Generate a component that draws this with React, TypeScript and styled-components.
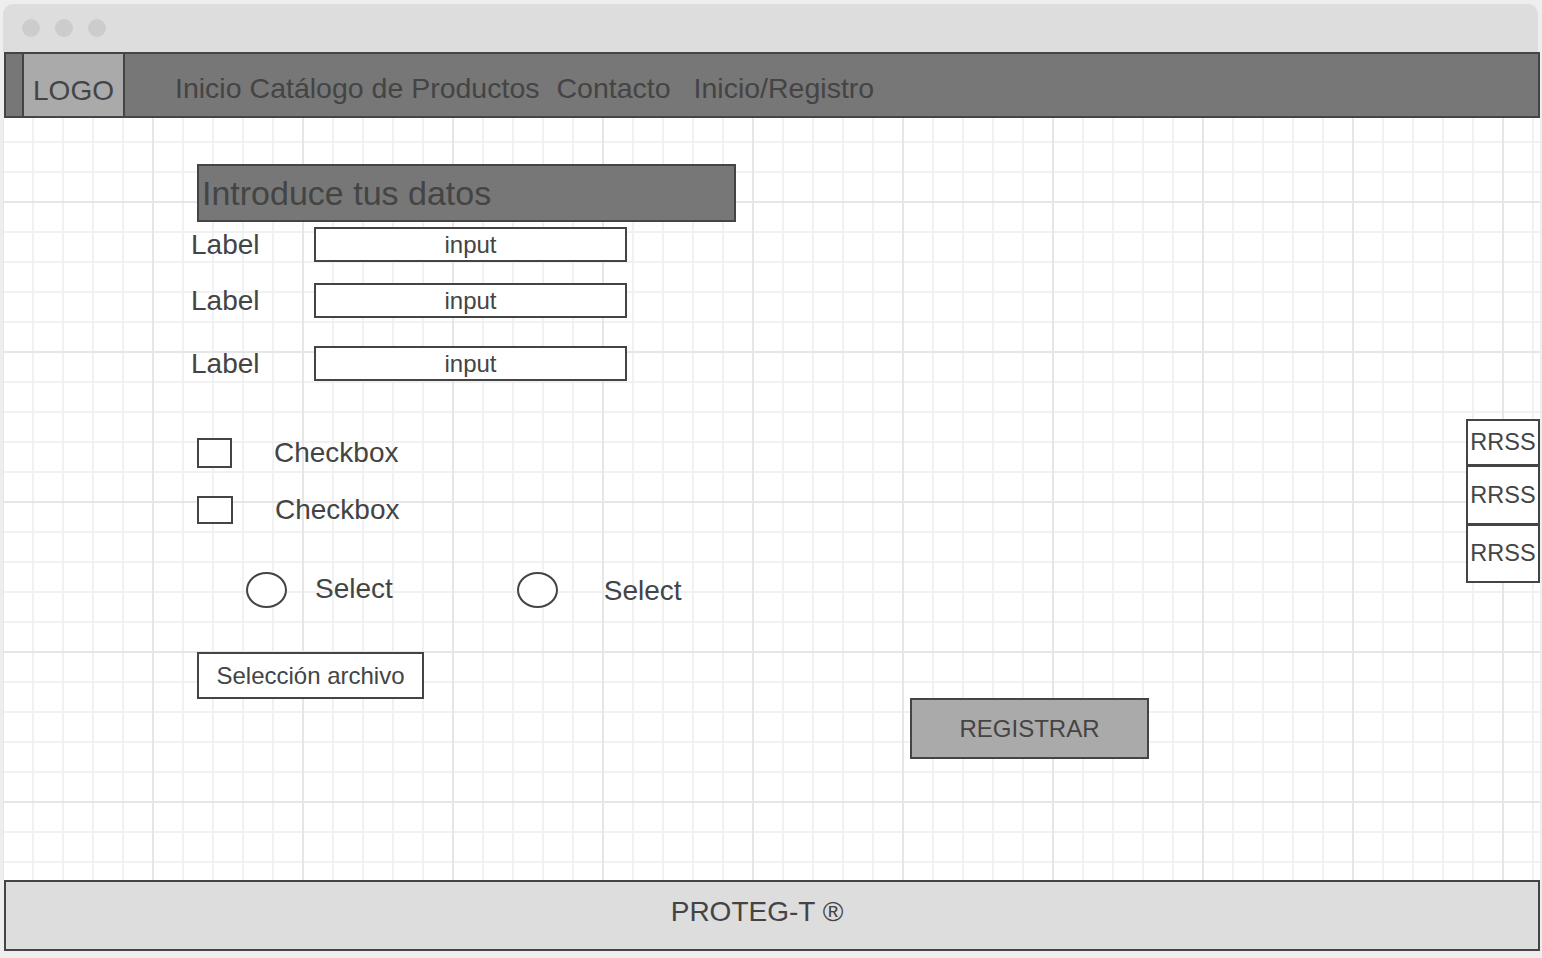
import React from "react";
import styled, { createGlobalStyle } from "styled-components";

const GlobalStyle = createGlobalStyle`
  html, body {
    margin: 0;
    padding: 0;
    background: #eeeeee;
  }
  body {
    font-family: "Liberation Sans", Arial, sans-serif;
    color: #444444;
  }
  * { box-sizing: border-box; }
`;

const Page = styled.div`
  width: 1542px;
  height: 958px;
  padding-top: 4px;
  overflow: hidden;
`;

const Window = styled.div`
  margin-left: 3px;
  width: 1537px;
`;

const TitleBar = styled.div`
  height: 48px;
  width: 1535px;
  background: #dddddd;
  border-radius: 10px 10px 0 0;
  display: flex;
  align-items: center;
  gap: 15px;
  padding-left: 19px;
`;

const Dot = styled.span`
  width: 18px;
  height: 18px;
  border-radius: 50%;
  background: #cccccc;
`;

const Header = styled.header`
  margin-left: 1px;
  width: 1536px;
  height: 66px;
  border: 2px solid #444444;
  background: #777777;
  display: flex;
  align-items: stretch;
`;

const Logo = styled.div`
  margin-left: 16px;
  width: 103px;
  border-left: 2px solid #444444;
  border-right: 2px solid #444444;
  background: #aaaaaa;
  display: flex;
  align-items: center;
  justify-content: center;
  padding-top: 12px;
  font-size: 28px;
  color: #444444;
`;

const Nav = styled.nav`
  margin-left: 50px;
  display: flex;
  align-items: center;
  padding-top: 6px;
`;

const NavItem = styled.span<{ $gap?: number }>`
  margin-left: ${(p) => p.$gap ?? 0}px;
  font-size: 28.5px;
  color: #444444;
  white-space: nowrap;
`;

const Content = styled.main`
  height: 762px;
  width: 1537px;
  display: flex;
  align-items: flex-start;
  background-color: #ffffff;
  background-image:
    linear-gradient(to right, #e6e6e6 2px, transparent 2px),
    linear-gradient(to bottom, #e6e6e6 2px, transparent 2px),
    linear-gradient(to right, #f1f1f1 2px, transparent 2px),
    linear-gradient(to bottom, #f1f1f1 2px, transparent 2px);
  background-size: 150px 150px, 150px 150px, 30px 30px, 30px 30px;
  background-position: -1px 83px, -1px 83px, -1px 23px, -1px 23px;
`;

const FormColumn = styled.section`
  width: 733px;
  flex-shrink: 0;
  padding-left: 188px;
  padding-top: 46px;
  display: flex;
  flex-direction: column;
  align-items: flex-start;
`;

const TitleBox = styled.h1`
  margin: 0 0 0 6px;
  width: 539px;
  height: 58px;
  border: 2px solid #444444;
  background: #777777;
  display: flex;
  align-items: center;
  padding-left: 3px;
  font-size: 34px;
  font-weight: normal;
  color: #444444;
`;

const FieldRow = styled.div<{ $top: number }>`
  margin-top: ${(p) => p.$top}px;
  display: flex;
  align-items: center;
`;

const Label = styled.label`
  width: 123px;
  font-size: 28px;
  color: #444444;
`;

const InputBox = styled.div`
  width: 313px;
  height: 35px;
  border: 2px solid #444444;
  background: #ffffff;
  display: flex;
  align-items: center;
  justify-content: center;
  font-size: 24px;
  color: #444444;
`;

const CheckRow = styled.div<{ $top: number }>`
  margin-top: ${(p) => p.$top}px;
  margin-left: 6px;
  display: flex;
  align-items: center;
`;

const CheckSquare = styled.span<{ $w: number; $h: number }>`
  width: ${(p) => p.$w}px;
  height: ${(p) => p.$h}px;
  border: 2px solid #444444;
  background: #ffffff;
`;

const CheckText = styled.span`
  margin-left: 42px;
  font-size: 28px;
  color: #444444;
`;

const RadioRow = styled.div`
  margin-top: 46px;
  display: flex;
  align-items: center;
`;

const RadioCircle = styled.span<{ $left: number }>`
  margin-left: ${(p) => p.$left}px;
  width: 41px;
  height: 36px;
  border: 2px solid #444444;
  border-radius: 50%;
  background: #ffffff;
`;

const RadioText = styled.span<{ $left: number; $shift: number }>`
  margin-left: ${(p) => p.$left}px;
  margin-top: ${(p) => p.$shift}px;
  font-size: 28px;
  color: #444444;
`;

const FileButton = styled.div`
  margin-top: 44px;
  margin-left: 6px;
  width: 227px;
  height: 47px;
  border: 2px solid #444444;
  background: #ffffff;
  display: flex;
  align-items: center;
  justify-content: center;
  font-size: 24px;
  color: #444444;
`;

const ActionColumn = styled.div`
  padding-top: 580px;
  margin-left: 174px;
`;

const RegisterButton = styled.div`
  width: 239px;
  height: 61px;
  border: 2px solid #444444;
  background: #aaaaaa;
  display: flex;
  align-items: center;
  justify-content: center;
  font-size: 24px;
  color: #444444;
`;

const SocialColumn = styled.aside`
  margin-left: auto;
  margin-right: 0;
  padding-top: 301px;
  display: flex;
  flex-direction: column;
`;

const SocialBox = styled.div<{ $h: number; $first?: boolean }>`
  width: 74px;
  height: ${(p) => p.$h}px;
  margin-top: ${(p) => (p.$first ? 0 : -1)}px;
  border: 2px solid #444444;
  background: #ffffff;
  display: flex;
  align-items: center;
  justify-content: center;
  font-size: 23.5px;
  color: #444444;
`;

const Footer = styled.footer`
  margin-left: 1px;
  width: 1536px;
  height: 71px;
  border: 2px solid #444444;
  background: #dddddd;
  display: flex;
  align-items: center;
  justify-content: center;
  padding-bottom: 7px;
  padding-right: 30px;
  font-size: 28px;
  color: #444444;
`;

export default function App() {
  return (
    <Page>
      <GlobalStyle />
      <Window>
        <TitleBar>
          <Dot />
          <Dot />
          <Dot />
        </TitleBar>
        <Header>
          <Logo>LOGO</Logo>
          <Nav>
            <NavItem>Inicio</NavItem>
            <NavItem $gap={8}>Catálogo de Productos</NavItem>
            <NavItem $gap={17}>Contacto</NavItem>
            <NavItem $gap={23}>Inicio/Registro</NavItem>
          </Nav>
        </Header>
        <Content>
          <FormColumn>
            <TitleBox>Introduce tus datos</TitleBox>
            <FieldRow $top={5}>
              <Label>Label</Label>
              <InputBox>input</InputBox>
            </FieldRow>
            <FieldRow $top={21}>
              <Label>Label</Label>
              <InputBox>input</InputBox>
            </FieldRow>
            <FieldRow $top={28}>
              <Label>Label</Label>
              <InputBox>input</InputBox>
            </FieldRow>
            <CheckRow $top={56}>
              <CheckSquare $w={35} $h={30} />
              <CheckText>Checkbox</CheckText>
            </CheckRow>
            <CheckRow $top={25}>
              <CheckSquare $w={36} $h={28} />
              <CheckText>Checkbox</CheckText>
            </CheckRow>
            <RadioRow>
              <RadioCircle $left={55} />
              <RadioText $left={28} $shift={-3}>Select</RadioText>
              <RadioCircle $left={124} />
              <RadioText $left={46} $shift={2}>Select</RadioText>
            </RadioRow>
            <FileButton>Selección archivo</FileButton>
          </FormColumn>
          <ActionColumn>
            <RegisterButton>REGISTRAR</RegisterButton>
          </ActionColumn>
          <SocialColumn>
            <SocialBox $h={47} $first>RRSS</SocialBox>
            <SocialBox $h={60}>RRSS</SocialBox>
            <SocialBox $h={59}>RRSS</SocialBox>
          </SocialColumn>
        </Content>
        <Footer>PROTEG-T ®</Footer>
      </Window>
    </Page>
  );
}
